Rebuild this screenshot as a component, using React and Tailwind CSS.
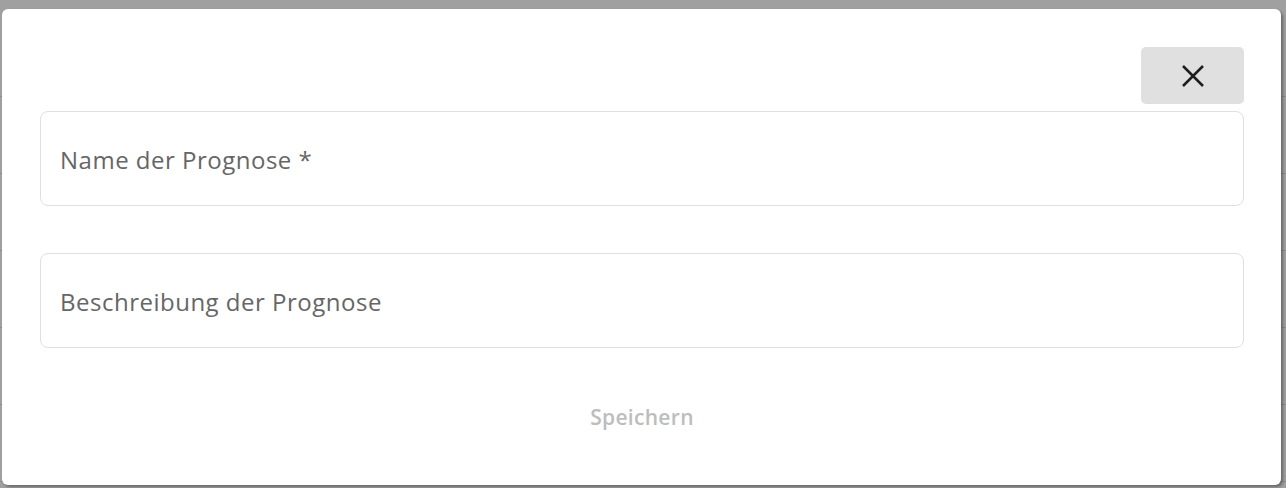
import React from "react";

export default function App() {
  const rows = [0, 1, 2, 3, 4, 5];
  return (
    <div className="relative h-[488px] w-full overflow-hidden bg-[#a0a0a0]" style={{ fontFamily: "'Open Sans', 'Noto Sans', sans-serif" }}>
      <div className="flex flex-col pt-[20px]">
        {rows.map((r) => (
          <div key={r} className="h-[77px] border-b border-[#8e8e8e]" />
        ))}
      </div>
      <div className="absolute left-[2px] top-[9px] flex h-[476px] w-[1279px] flex-col rounded-[6px] bg-white pl-[38px] pr-[37px] pt-[38px] shadow-[2px_2px_3px_rgba(0,0,0,0.35)]">
        <div className="flex justify-end">
          <button className="flex h-[57px] w-[103px] items-center justify-center rounded-[5px] bg-[#e0e0e0]">
            <svg width="22" height="22" viewBox="0 0 22 22" fill="none" stroke="#1e1e1e" strokeWidth="2.5" strokeLinecap="butt">
              <path d="M1 1 L21 21 M21 1 L1 21" />
            </svg>
          </button>
        </div>
        <div className="mt-[7px] flex h-[95px] items-center rounded-[8px] border border-[#e0e0e0] px-[19px] pt-[2px]">
          <span className="text-[24px] tracking-[0.5px] text-[#666666]">Name der Prognose *</span>
        </div>
        <div className="mt-[47px] flex h-[95px] items-center rounded-[8px] border border-[#e0e0e0] px-[19px] pt-[2px]">
          <span className="text-[24px] tracking-[0.5px] text-[#666666]">Beschreibung der Prognose</span>
        </div>
        <div className="mt-[54px] flex justify-center">
          <span className="text-[21px] font-semibold tracking-[0.3px] text-[#bdbdbd]">Speichern</span>
        </div>
      </div>
    </div>
  );
}
